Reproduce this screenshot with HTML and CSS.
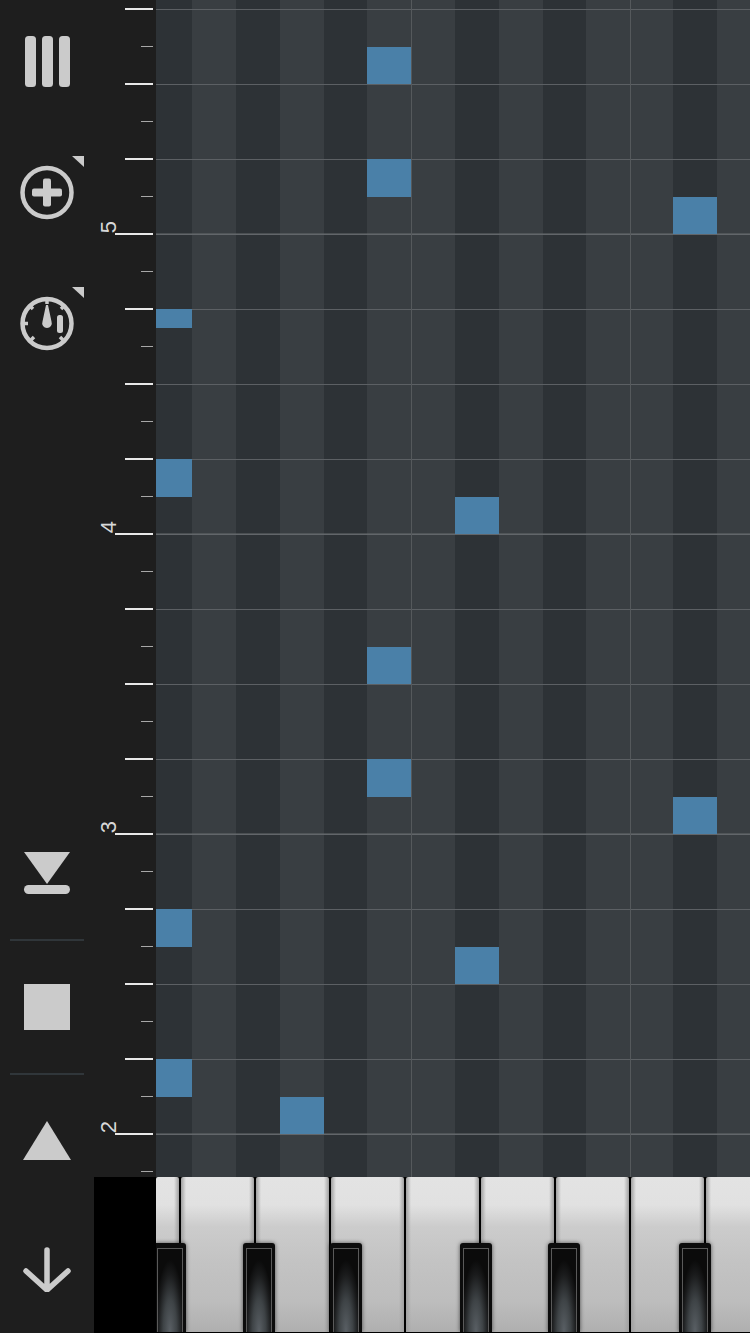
FILE: index.html
```html
<!DOCTYPE html>
<html lang="en">
<head>
  <meta charset="UTF-8" />
  <title>Piano Roll</title>
  <link rel="stylesheet" href="styles.css">
</head>
<body>

<div class="app">

  <aside class="sidebar">
    <div class="tools">
      <svg class="icon icon-menu" viewBox="0 0 94 51">
        <rect x="25" y="0" width="11" height="51" rx="3.5" />
        <rect x="42" y="0" width="11" height="51" rx="3.5" />
        <rect x="59" y="0" width="11" height="51" rx="3.5" />
      </svg>
      <svg class="icon icon-add" viewBox="0 0 94 66">
        <path d="M72 2 H84 V13 Z" />
        <circle class="line" cx="47" cy="38.5" r="24.5" />
        <rect x="32" y="34.5" width="30" height="8" rx="2" />
        <rect x="43" y="24.5" width="8" height="28" rx="2" />
      </svg>
      <svg class="icon icon-gauge" viewBox="0 0 94 66">
        <path d="M72 2 H84 V13 Z" />
        <circle class="line" cx="47" cy="38.5" r="24.5" />
        <path class="line thin" d="M47 14 V19 M22 38.5 H28 M30 21 L33 24 M30 56 L34 52 M64 56 L60 52 M64 21 L61 24" />
        <path d="M46 20 H48 L51.5 36.5 A4.8 4.8 0 1 1 42.5 36.5 Z" />
        <rect x="57" y="30" width="6" height="18" rx="2.5" />
      </svg>
    </div>

    <div class="transport">
      <svg class="icon icon-rewind" viewBox="0 0 94 43">
        <path d="M24 0 H70 L47 32 Z" />
        <rect x="24" y="33" width="46" height="9" rx="4.5" />
      </svg>
      <div class="divider divider-top"></div>
      <svg class="icon icon-stop" viewBox="0 0 94 46">
        <rect x="24" y="0" width="46" height="46" />
      </svg>
      <div class="divider divider-bottom"></div>
      <svg class="icon icon-play" viewBox="0 0 94 39">
        <path d="M47 0 L71 39 H23 Z" />
      </svg>
      <svg class="icon icon-down" viewBox="0 0 94 46">
        <path class="line arrow" d="M47 4 V44 M26 25 L47 44 L68 25" />
      </svg>
    </div>
  </aside>

  <main class="editor">
    <div class="score">
      <div class="ruler">
        <div class="bar-labels">
          <div class="bar"><span>5</span></div>
          <div class="bar"><span>4</span></div>
          <div class="bar"><span>3</span></div>
          <div class="bar"><span>2</span></div>
        </div>
      </div>

      <div class="roll">
        <div class="lanes">
          <div class="lane dark w36"></div>
          <div class="lane w44"></div>
          <div class="lane dark w44"></div>
          <div class="lane w44"></div>
          <div class="lane dark w43"></div>
          <div class="lane w44 octave"></div>
          <div class="lane w44"></div>
          <div class="lane dark w44"></div>
          <div class="lane w44"></div>
          <div class="lane dark w43"></div>
          <div class="lane w44 octave"></div>
          <div class="lane w43"></div>
          <div class="lane dark w44"></div>
          <div class="lane w33"></div>
        </div>
        <div class="note" style="left: 211px; top: 47px; width: 44px; height: 37px;"></div>
        <div class="note" style="left: 211px; top: 159px; width: 44px; height: 38px;"></div>
        <div class="note" style="left: 517px; top: 197px; width: 44px; height: 37px;"></div>
        <div class="note" style="left: 0; top: 309px; width: 36px; height: 19px;"></div>
        <div class="note" style="left: 0; top: 459px; width: 36px; height: 38px;"></div>
        <div class="note" style="left: 299px; top: 497px; width: 44px; height: 37px;"></div>
        <div class="note" style="left: 211px; top: 647px; width: 44px; height: 37px;"></div>
        <div class="note" style="left: 211px; top: 759px; width: 44px; height: 38px;"></div>
        <div class="note" style="left: 517px; top: 797px; width: 44px; height: 37px;"></div>
        <div class="note" style="left: 0; top: 909px; width: 36px; height: 38px;"></div>
        <div class="note" style="left: 299px; top: 947px; width: 44px; height: 37px;"></div>
        <div class="note" style="left: 0; top: 1059px; width: 36px; height: 38px;"></div>
        <div class="note" style="left: 124px; top: 1097px; width: 44px; height: 37px;"></div>
      </div>
    </div>

    <div class="keyboard">
      <div class="corner"></div>
      <div class="keys">
        <div class="white-keys">
          <div class="white-key first"></div>
          <div class="white-key"></div>
          <div class="white-key"></div>
          <div class="white-key"></div>
          <div class="white-key"></div>
          <div class="white-key"></div>
          <div class="white-key"></div>
          <div class="white-key"></div>
          <div class="white-key"></div>
        </div>
        <div class="black-key" style="left: -2px;"></div>
        <div class="black-key" style="left: 87px;"></div>
        <div class="black-key" style="left: 174px;"></div>
        <div class="black-key" style="left: 304px;"></div>
        <div class="black-key" style="left: 392px;"></div>
        <div class="black-key" style="left: 523px;"></div>
      </div>
    </div>
  </main>

</div>

</body>
</html>
```

FILE: styles.css
```css
html, body {
  margin: 0;
  height: 100%;
  background: #1e1e1e;
  overflow: hidden;
}

.app {
  display: flex;
  width: 750px;
  height: 1333px;
  font-family: "Liberation Sans", Arial, sans-serif;
}

/* left toolbar */
.sidebar {
  width: 94px;
  flex-shrink: 0;
  display: flex;
  flex-direction: column;
  justify-content: space-between;
  background: #1e1e1e;
}

.icon {
  display: block;
  width: 94px;
  fill: #cbcbcb;
}

.line {
  fill: none;
  stroke: #cbcbcb;
  stroke-width: 4.5;
}

.thin {
  stroke-width: 3.5;
}

.arrow {
  stroke-width: 5.5;
  stroke-linecap: round;
}

.tools {
  padding-top: 36px;
}

.icon-menu {
  height: 51px;
}

.icon-add {
  height: 66px;
  margin-top: 67px;
}

.icon-gauge {
  height: 66px;
  margin-top: 65px;
}

.transport {
  padding-bottom: 41px;
}

.icon-rewind {
  height: 43px;
}

.divider {
  height: 2px;
  margin-left: 10px;
  margin-right: 10px;
  background: #30363a;
}

.divider-top {
  margin-top: 44px;
  margin-bottom: 43px;
}

.divider-bottom {
  margin-top: 43px;
  margin-bottom: 46px;
}

.icon-stop {
  height: 46px;
}

.icon-play {
  height: 39px;
}

.icon-down {
  height: 46px;
  margin-top: 86px;
}

/* score + keyboard */
.editor {
  flex: 1;
  display: flex;
  flex-direction: column;
  min-width: 0;
}

.score {
  height: 1177px;
  display: flex;
  overflow: hidden;
}

.ruler {
  width: 62px;
  flex-shrink: 0;
  background-color: #1e1e1e;
  background-image:
    linear-gradient(#e8e8e8 2px, transparent 2px),
    linear-gradient(#e8e8e8 2px, transparent 2px),
    linear-gradient(#a8a8a8 1.5px, transparent 1.5px);
  background-repeat: repeat-y;
  background-size: 38px 300px, 28px 75px, 12px 75px;
  background-position: right 3px top 233px, right 3px top 8px, right 3px top 46px;
}

.bar-labels {
  margin-top: -66px;
}

.bar {
  height: 300px;
  display: flex;
  align-items: flex-end;
}

.bar span {
  display: block;
  margin: 0 0 -4px 9px;
  font-size: 22px;
  line-height: 22px;
  color: #d8d8d8;
  transform: rotate(-90deg);
}

.roll {
  position: relative;
  flex: 1;
  min-width: 0;
}

.lanes {
  display: flex;
  height: 100%;
}

.lane {
  background-color: #393e42;
  background-image:
    linear-gradient(#686c6f 1.5px, transparent 1.5px),
    linear-gradient(#5c6064 1.5px, transparent 1.5px);
  background-size: 100% 300px, 100% 75px;
  background-position: 0 233.5px, 0 9px;
}

.lane.dark {
  background-color: #2d3236;
}

.lane.octave {
  box-shadow: 1px 0 0 #55595c;
  position: relative;
}

.w33 { width: 33px; }
.w36 { width: 36px; }
.w43 { width: 43px; }
.w44 { width: 44px; }

.note {
  position: absolute;
  background: #4a80a8;
}

.keyboard {
  flex: 1;
  display: flex;
  min-height: 0;
}

.corner {
  width: 62px;
  flex-shrink: 0;
  background: #000;
}

.keys {
  position: relative;
  flex: 1;
  background: #000;
  overflow: hidden;
}

.white-keys {
  display: flex;
  gap: 2px;
  height: 155px;
}

.white-key {
  width: 73px;
  flex-shrink: 0;
  border-radius: 2px 2px 0 0;
  background:
    linear-gradient(to right, #a0a0a0, rgba(160, 160, 160, 0) 5px, rgba(160, 160, 160, 0) 68px, #a0a0a0),
    linear-gradient(#e3e3e3, #e1e1e1 18%, #cccccc 32%, #c3c3c3 55%, #bdbdbd 80%, #afafaf);
}

.white-key.first {
  width: 23px;
  background:
    linear-gradient(to right, rgba(160, 160, 160, 0) 18px, #a0a0a0),
    linear-gradient(#e3e3e3, #e1e1e1 18%, #cccccc 32%, #c3c3c3 55%, #bdbdbd 80%, #afafaf);
}

.black-key {
  position: absolute;
  top: 66px;
  bottom: 1px;
  width: 32px;
  box-sizing: border-box;
  padding: 5px 3px 0;
  background: #0c0c0c;
  border-radius: 3px 3px 0 0;
  box-shadow: 0 0 4px rgba(0, 0, 0, 0.6);
}

.black-key::after {
  content: "";
  display: block;
  height: 100%;
  box-sizing: border-box;
  border: 1px solid #5a5a5a;
  border-bottom: none;
  background: radial-gradient(ellipse 15px 72px at 50% 100%, #5a6065, #3e4346 45%, #1a1b1c 80%, #0b0b0b 100%), #0b0b0b;
}
```
